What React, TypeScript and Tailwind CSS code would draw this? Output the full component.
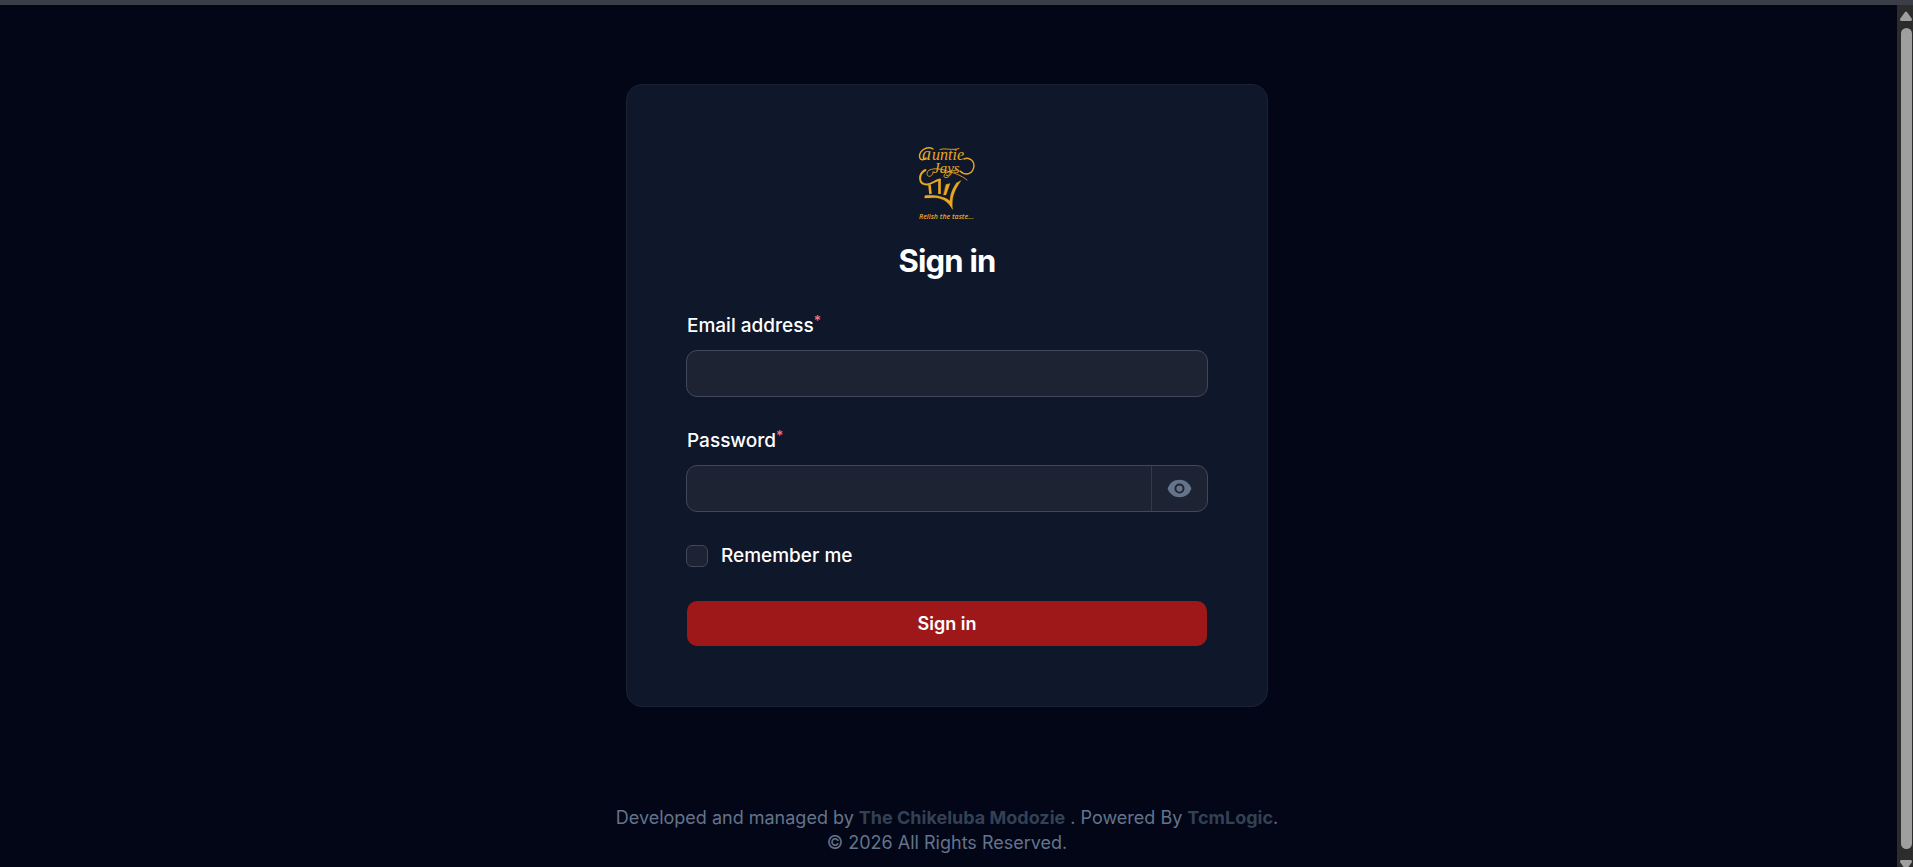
import { useState } from "react"

const Logo = () => {
  return (
    <svg
      className="w-[60px] h-20"
      viewBox="17 13 60 80"
      fill="none"
      stroke="#e9a820"
      strokeLinecap="round"
      role="img"
      aria-label="Auntie Jays"
    >
      <g
        fill="#e9a820"
        stroke="none"
        fontFamily="'Liberation Serif', serif"
        fontStyle="italic"
      >
        <text x="22" y="30" fontSize="18">a</text>
        <text x="32" y="30" fontSize="16">untie</text>
        <text x="33" y="43" fontSize="15">Jays</text>
      </g>
      {/* swashes around the name */}
      <path d="M33 19C28 15.500 20 20 19.500 26C19.500 30 23 31 26 28" strokeWidth="1.400" />
      <path d="M40 19.500C45 17.500 52 21 59 18.500" strokeWidth="0.900" />
      <path d="M64 29C66 28 69 28 71.500 30C76 34 74 43 67 44C64 44 62 43 60 41" strokeWidth="1.400" />
      <path d="M33 42C33 47 27 48 27 43.500C27 38 39 37.500 47 41C54 43 61 45 67 50" strokeWidth="0.900" />
      <path d="M52 42C50 48 44 49 44 46C44 43 50 41 57 40" strokeWidth="0.900" />
      {/* chef hat */}
      <path d="M25.500 40C18 44 18 54.500 27 54.500C32 54.500 34 50.500 40 49.500" strokeWidth="2" />
      <path d="M29.500 55L30.500 64M39.500 50L39.500 64" strokeWidth="2.600" strokeLinecap="butt" />
      <path d="M46 54.500L50 53.500L46 65H43.500Z" fill="#e9a820" strokeWidth="0.300" />
      <path
        d="M56.500 53L61 50.500C54 61 51.500 67 52.500 79.500C49 73 45 69.500 38 68C33 67.200 29 68 24.500 68L25 65.500C33 65 43 65.500 50 71C50 64 53 58 56.500 53Z"
        fill="#e9a820"
        strokeWidth="0.300"
      />
      <text
        x="19"
        y="89"
        fill="#e9a820"
        stroke="none"
        fontSize="7"
        fontWeight="600"
        fontStyle="italic"
        fontFamily="'Open Sans', sans-serif"
      >
        Relish the taste...
      </text>
    </svg>
  )
}

const EyeIcon = () => {
  return (
    <svg className="w-[25px] h-[25px]" viewBox="0 0 20 20" fill="#64748b" aria-hidden="true">
      <path d="M10 12.500a2.500 2.500 0 1 0 0-5 2.500 2.500 0 0 0 0 5Z" />
      <path
        fillRule="evenodd"
        clipRule="evenodd"
        d="M.664 10.590a1.651 1.651 0 0 1 0-1.186A10.004 10.004 0 0 1 10 3c4.257 0 7.893 2.660 9.336 6.410.147.381.146.804 0 1.186A10.004 10.004 0 0 1 10 17c-4.257 0-7.893-2.660-9.336-6.410ZM14 10a4 4 0 1 1-8 0 4 4 0 0 1 8 0Z"
      />
    </svg>
  )
}

const FieldLabel = ({ htmlFor, children }: { htmlFor: string; children: string }) => {
  return (
    <label htmlFor={htmlFor} className="flex items-start px-px text-[19px] leading-[25px] font-medium">
      {children}
      <span className="text-[14px] leading-4 text-[#fb7185]">*</span>
    </label>
  )
}

const Scrollbar = () => {
  return (
    <div className="w-4 h-full shrink-0 bg-[#2c2c2c] flex flex-col items-center gap-[7px] pt-[6px] pl-[2px] overflow-hidden">
      <svg className="w-3 h-[10px] shrink-0" viewBox="0 0 12 10" fill="#9f9f9f">
        <path d="M5 1Q6 0 7 1L12 8Q12 10 11 10H1Q0 10 0 8Z" />
      </svg>
      <div className="w-[11px] h-[821px] shrink-0 rounded-full bg-[#9f9f9f]" />
      <svg className="w-3 h-[10px] mt-1 shrink-0" viewBox="0 0 12 10" fill="#9f9f9f">
        <path d="M5 9Q6 10 7 9L12 2Q12 0 11 0H1Q0 0 0 2Z" />
      </svg>
    </div>
  )
}

const App = () => {
  const [visible, setVisible] = useState(false)

  return (
    <div className="h-screen flex flex-col bg-[#020617] text-white font-['Inter',sans-serif]">
      <div className="h-[5px] shrink-0 bg-[#3c3e47]" />
      <div className="flex flex-1 min-h-0">
        <div className="flex-1 flex flex-col items-center overflow-hidden pt-[79px] pr-[3px]">
          <main className="w-full max-w-[642px] shrink-0 rounded-2xl border border-[#1c2233] bg-[#0f172a] px-[59px] pt-[58px] pb-[60px]">
            <div className="flex flex-col items-center gap-[19px]">
              <Logo />
              <h1 className="text-[31px] leading-[38px] font-bold tracking-tight">Sign in</h1>
            </div>

            <form className="flex flex-col mt-[33px]" onSubmit={(e) => e.preventDefault()}>
              <div className="flex flex-col gap-3">
                <FieldLabel htmlFor="email">Email address</FieldLabel>
                <input
                  id="email"
                  type="email"
                  required
                  className="w-full h-[47px] rounded-[11px] border border-[#42475a] bg-[#1e2334] px-4 text-[18px] outline-none"
                />
              </div>

              <div className="flex flex-col gap-3 mt-[31px]">
                <FieldLabel htmlFor="password">Password</FieldLabel>
                <div className="flex h-[47px] rounded-[11px] border border-[#42475a] bg-[#1e2334]">
                  <input
                    id="password"
                    type={visible ? "text" : "password"}
                    required
                    className="flex-1 min-w-0 px-4 text-[18px] outline-none"
                  />
                  <button
                    type="button"
                    aria-label="Show password"
                    className="w-[56px] flex items-center justify-center border-l border-[#343949]"
                    onClick={() => setVisible(!visible)}
                  >
                    <EyeIcon />
                  </button>
                </div>
              </div>

              <label className="flex items-center gap-[13px] mt-[31px] text-[19px] leading-[25px] font-medium">
                <input
                  type="checkbox"
                  className="appearance-none w-[22px] h-[22px] rounded-[6px] border border-[#42475a] bg-[#1e2334] checked:bg-[#9f1819]"
                />
                Remember me
              </label>

              <button
                type="submit"
                className="h-[45px] mx-px mt-[33px] rounded-[10px] bg-[#9f1819] text-[18px] leading-[25px] font-semibold"
              >
                Sign in
              </button>
            </form>
          </main>

          <footer className="mt-[98px] text-center text-[18px] leading-[25px] text-[#64748b]">
            <p>
              Developed and managed by{" "}
              <a href="#" className="font-bold text-[#334155]">The Chikeluba Modozie</a>
              {" "}. Powered By{" "}
              <a href="#" className="font-bold text-[#334155]">TcmLogic</a>.
            </p>
            <p>© 2026 All Rights Reserved.</p>
          </footer>
        </div>
        <Scrollbar />
      </div>
    </div>
  )
}

export default App
